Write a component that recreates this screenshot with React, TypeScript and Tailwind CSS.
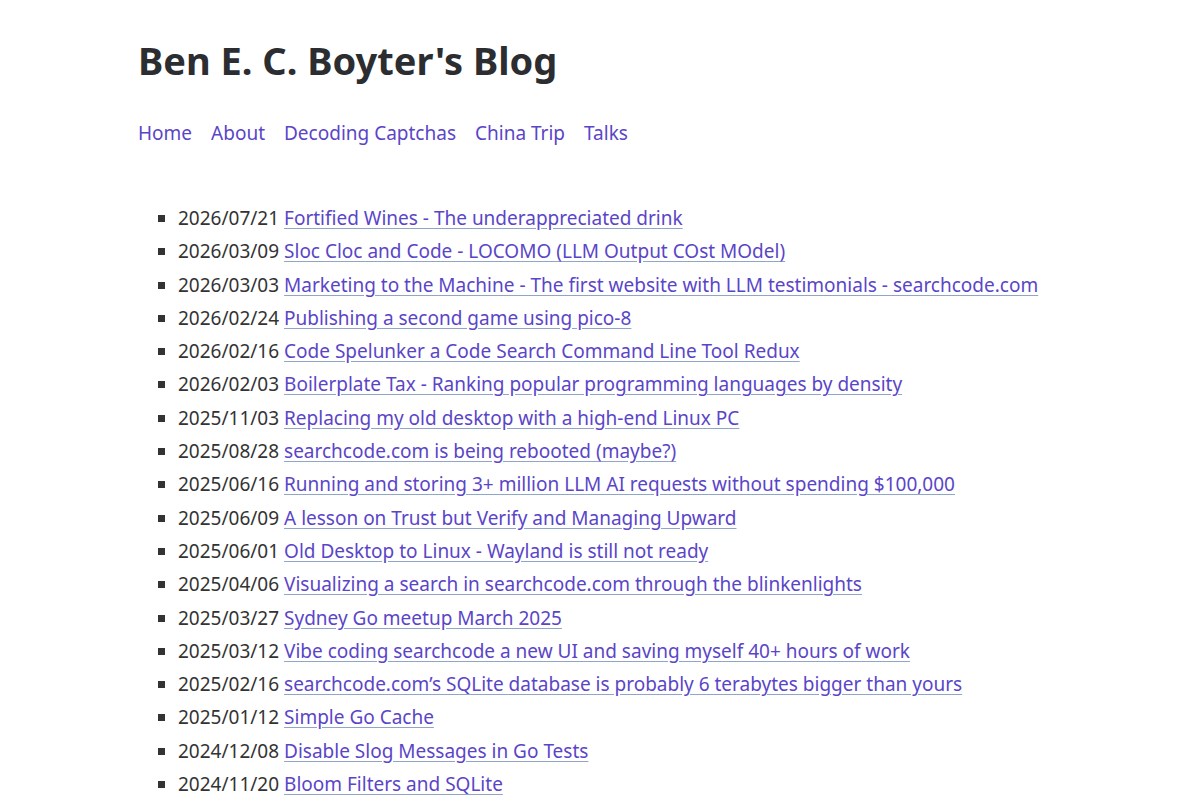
import React from "react";

type Post = { date: string; title: string };

const posts: Post[] = [
  { date: "2026/07/21", title: "Fortified Wines - The underappreciated drink" },
  { date: "2026/03/09", title: "Sloc Cloc and Code - LOCOMO (LLM Output COst MOdel)" },
  { date: "2026/03/03", title: "Marketing to the Machine - The first website with LLM testimonials - searchcode.com" },
  { date: "2026/02/24", title: "Publishing a second game using pico-8" },
  { date: "2026/02/16", title: "Code Spelunker a Code Search Command Line Tool Redux" },
  { date: "2026/02/03", title: "Boilerplate Tax - Ranking popular programming languages by density" },
  { date: "2025/11/03", title: "Replacing my old desktop with a high-end Linux PC" },
  { date: "2025/08/28", title: "searchcode.com is being rebooted (maybe?)" },
  { date: "2025/06/16", title: "Running and storing 3+ million LLM AI requests without spending $100,000" },
  { date: "2025/06/09", title: "A lesson on Trust but Verify and Managing Upward" },
  { date: "2025/06/01", title: "Old Desktop to Linux - Wayland is still not ready" },
  { date: "2025/04/06", title: "Visualizing a search in searchcode.com through the blinkenlights" },
  { date: "2025/03/27", title: "Sydney Go meetup March 2025" },
  { date: "2025/03/12", title: "Vibe coding searchcode a new UI and saving myself 40+ hours of work" },
  { date: "2025/02/16", title: "searchcode.com’s SQLite database is probably 6 terabytes bigger than yours" },
  { date: "2025/01/12", title: "Simple Go Cache" },
  { date: "2024/12/08", title: "Disable Slog Messages in Go Tests" },
  { date: "2024/11/20", title: "Bloom Filters and SQLite" },
];

const navLinks = ["Home", "About", "Decoding Captchas", "China Trip", "Talks"];

const App: React.FC = () => {
  return (
    <div className="min-h-screen bg-white text-[#333] font-['Noto_Sans',sans-serif]">
      <div className="px-[138px]">
        {/* Site header */}
        <h1 className="pt-[36px] text-[38px] leading-[48px] font-bold text-[#2b2d31]">
          Ben E. C. Boyter's Blog
        </h1>

        <nav className="mt-[36px] flex gap-[19px] text-[19px] leading-[26px]">
          {navLinks.map((link) => (
            <a key={link} href="#" className="text-[#5a45c8]">
              {link}
            </a>
          ))}
        </nav>

        {/* Post list */}
        <ul className="mt-[56px] list-[square] pl-[40px] text-[19px] leading-[33.3px] marker:text-[#333]">
          {posts.map((post) => (
            <li key={post.date + post.title}>
              {post.date}{" "}
              <a
                href="#"
                className="text-[#5a45c8] underline decoration-[#8fa6c8] underline-offset-[3px]"
              >
                {post.title}
              </a>
            </li>
          ))}
        </ul>
      </div>
    </div>
  );
};

export default App;
